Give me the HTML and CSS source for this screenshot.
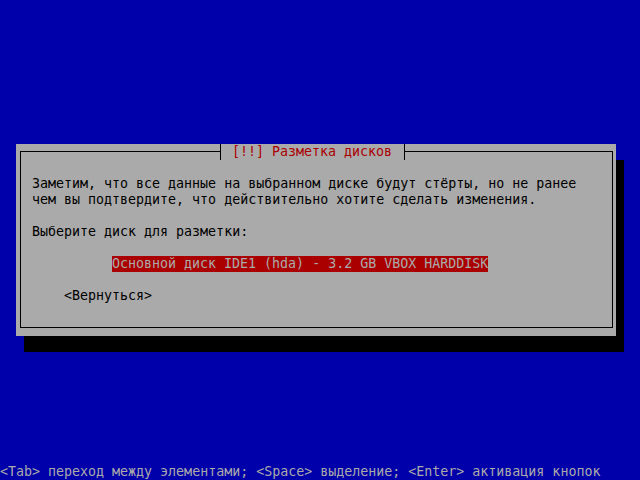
FILE: index.html
```html
<!DOCTYPE html>
<html lang="ru">
<head>
    <meta charset="UTF-8">
    <title>Разметка дисков</title>
    <link rel="stylesheet" href="styles.css">
</head>
<body>
    <div class="dialog">
        <div class="frame">
            <div class="title">[!!] Разметка дисков</div>
            <p class="line">Заметим, что все данные на выбранном диске будут стёрты, но не ранее</p>
            <p class="line">чем вы подтвердите, что действительно хотите сделать изменения.</p>
            <p class="line gap">Выберите диск для разметки:</p>
            <p class="line gap choice"><span class="selected">Основной диск IDE1 (hda) - 3.2 GB VBOX HARDDISK</span></p>
            <p class="line gap back">&lt;Вернуться&gt;</p>
        </div>
    </div>

    <footer>&lt;Tab&gt; переход между элементами; &lt;Space&gt; выделение; &lt;Enter&gt; активация кнопок</footer>
</body>
</html>
```

FILE: styles.css
```css
html, body {
    margin: 0;
    padding: 0;
}
body {
    width: 640px;
    height: 480px;
    overflow: hidden;
    background: #0000aa;
    color: #000;
    font-family: 'DejaVu Sans Mono', monospace;
    font-size: 13.3px;
    line-height: 16px;
}
.dialog {
    margin: 144px 0 0 16px;
    width: 600px;
    height: 192px;
    box-sizing: border-box;
    padding: 7px 3px 8px 4px;
    background: #aaaaaa;
    box-shadow: 8px 16px 0 #000;
}
.frame {
    position: relative;
    height: 100%;
    box-sizing: border-box;
    border: 1px solid #000;
    padding: 24px 0 0 11px;
}
.title {
    position: absolute;
    top: -8px;
    left: 199px;
    width: 172px;
    height: 16px;
    padding-left: 11px;
    border-left: 1px solid #000;
    border-right: 1px solid #000;
    background: #aaaaaa;
    color: #aa0000;
    white-space: pre;
}
.line {
    margin: 0;
    height: 16px;
    white-space: pre;
}
.gap {
    margin-top: 16px;
}
.choice {
    padding-left: 80px;
}
.selected {
    display: inline-block;
    background: #aa0000;
    color: #aaaaaa;
}
.back {
    padding-left: 32px;
}
footer {
    margin-top: 128px;
    height: 16px;
    color: #aaaaaa;
    white-space: pre;
}
```
